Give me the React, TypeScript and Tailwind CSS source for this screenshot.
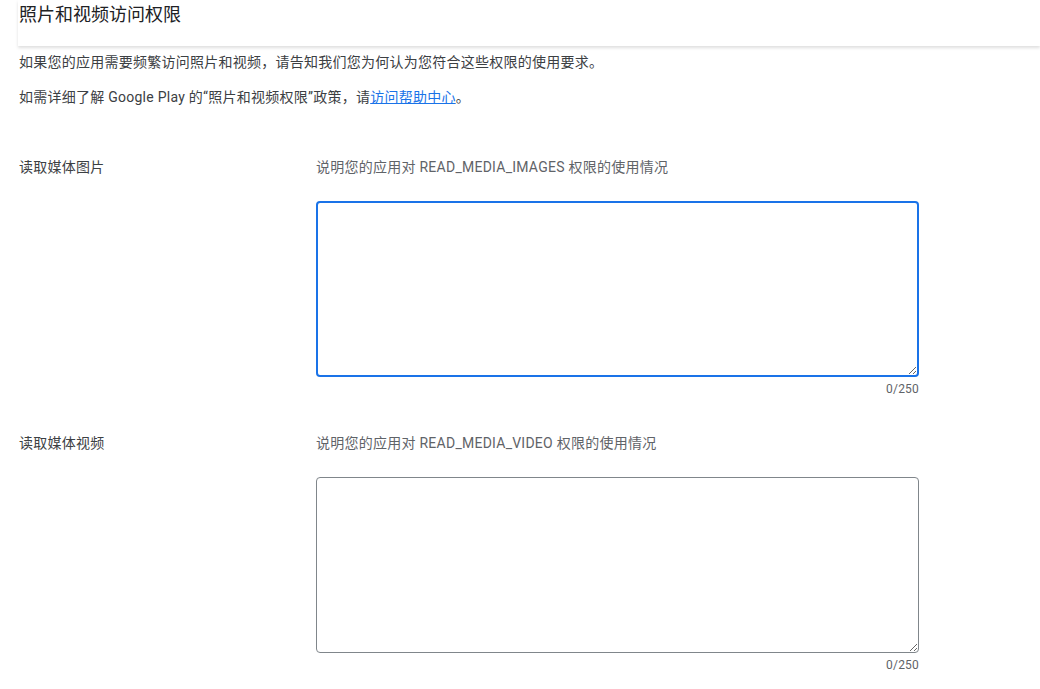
import { useState } from "react";

const FONT = "font-['Roboto','Noto_Sans_CJK_SC',sans-serif]";

interface FieldProps {
  label: string;
  permission: string;
  active?: boolean;
}

function PermissionField({ label, permission, active = false }: FieldProps) {
  const [value, setValue] = useState("");

  return (
    <div className="grid grid-cols-[297px_603px]">
      <div className="text-[14px] leading-5 tracking-[0.25px] text-[#3c4043]">{label}</div>
      <div className="flex flex-col">
        <div className="text-[14px] leading-5 tracking-[0.25px] text-[#5f6368]">
          说明您的应用对 {permission} 权限的使用情况
        </div>
        <textarea
          value={value}
          onChange={(e) => setValue(e.target.value)}
          className={`mt-[24px] h-[176px] w-full rounded-[4px] bg-white px-3 py-2 text-[14px] outline-none ${
            active ? "border-2 border-[#1a73e8]" : "border border-[#80868b]"
          }`}
        />
        <div className="mt-[4px] text-right text-[12px] leading-4 tracking-[0.2px] text-[#5f6368]">
          {value.length}/250
        </div>
      </div>
    </div>
  );
}

export default function App() {
  return (
    <div className={`${FONT} h-[689px] w-full overflow-hidden bg-white`}>
      <div className="ml-[18px] h-[46px] bg-white pl-[1px] pt-[3px] shadow-[0_2px_3px_rgba(0,0,0,0.13)]">
        <h1 className="text-[18px] leading-6 font-normal text-[#202124]">
          照片和视频访问权限
        </h1>
      </div>

      <div className="pl-[19px] text-[14px] leading-5 tracking-[0.25px] text-[#3c4043]">
        <p className="mt-[6px]">
          如果您的应用需要频繁访问照片和视频，请告知我们您为何认为您符合这些权限的使用要求。
        </p>
        <p className="mt-[15px]">
          如需详细了解 Google Play 的“照片和视频权限”政策，请
          <a href="#" className="text-[#1a73e8] underline">
            访问帮助中心
          </a>
          。
        </p>

        <div className="mt-[50px]">
          <PermissionField label="读取媒体图片" permission="READ_MEDIA_IMAGES" active />
        </div>
        <div className="mt-[36px]">
          <PermissionField label="读取媒体视频" permission="READ_MEDIA_VIDEO" />
        </div>
      </div>
    </div>
  );
}
